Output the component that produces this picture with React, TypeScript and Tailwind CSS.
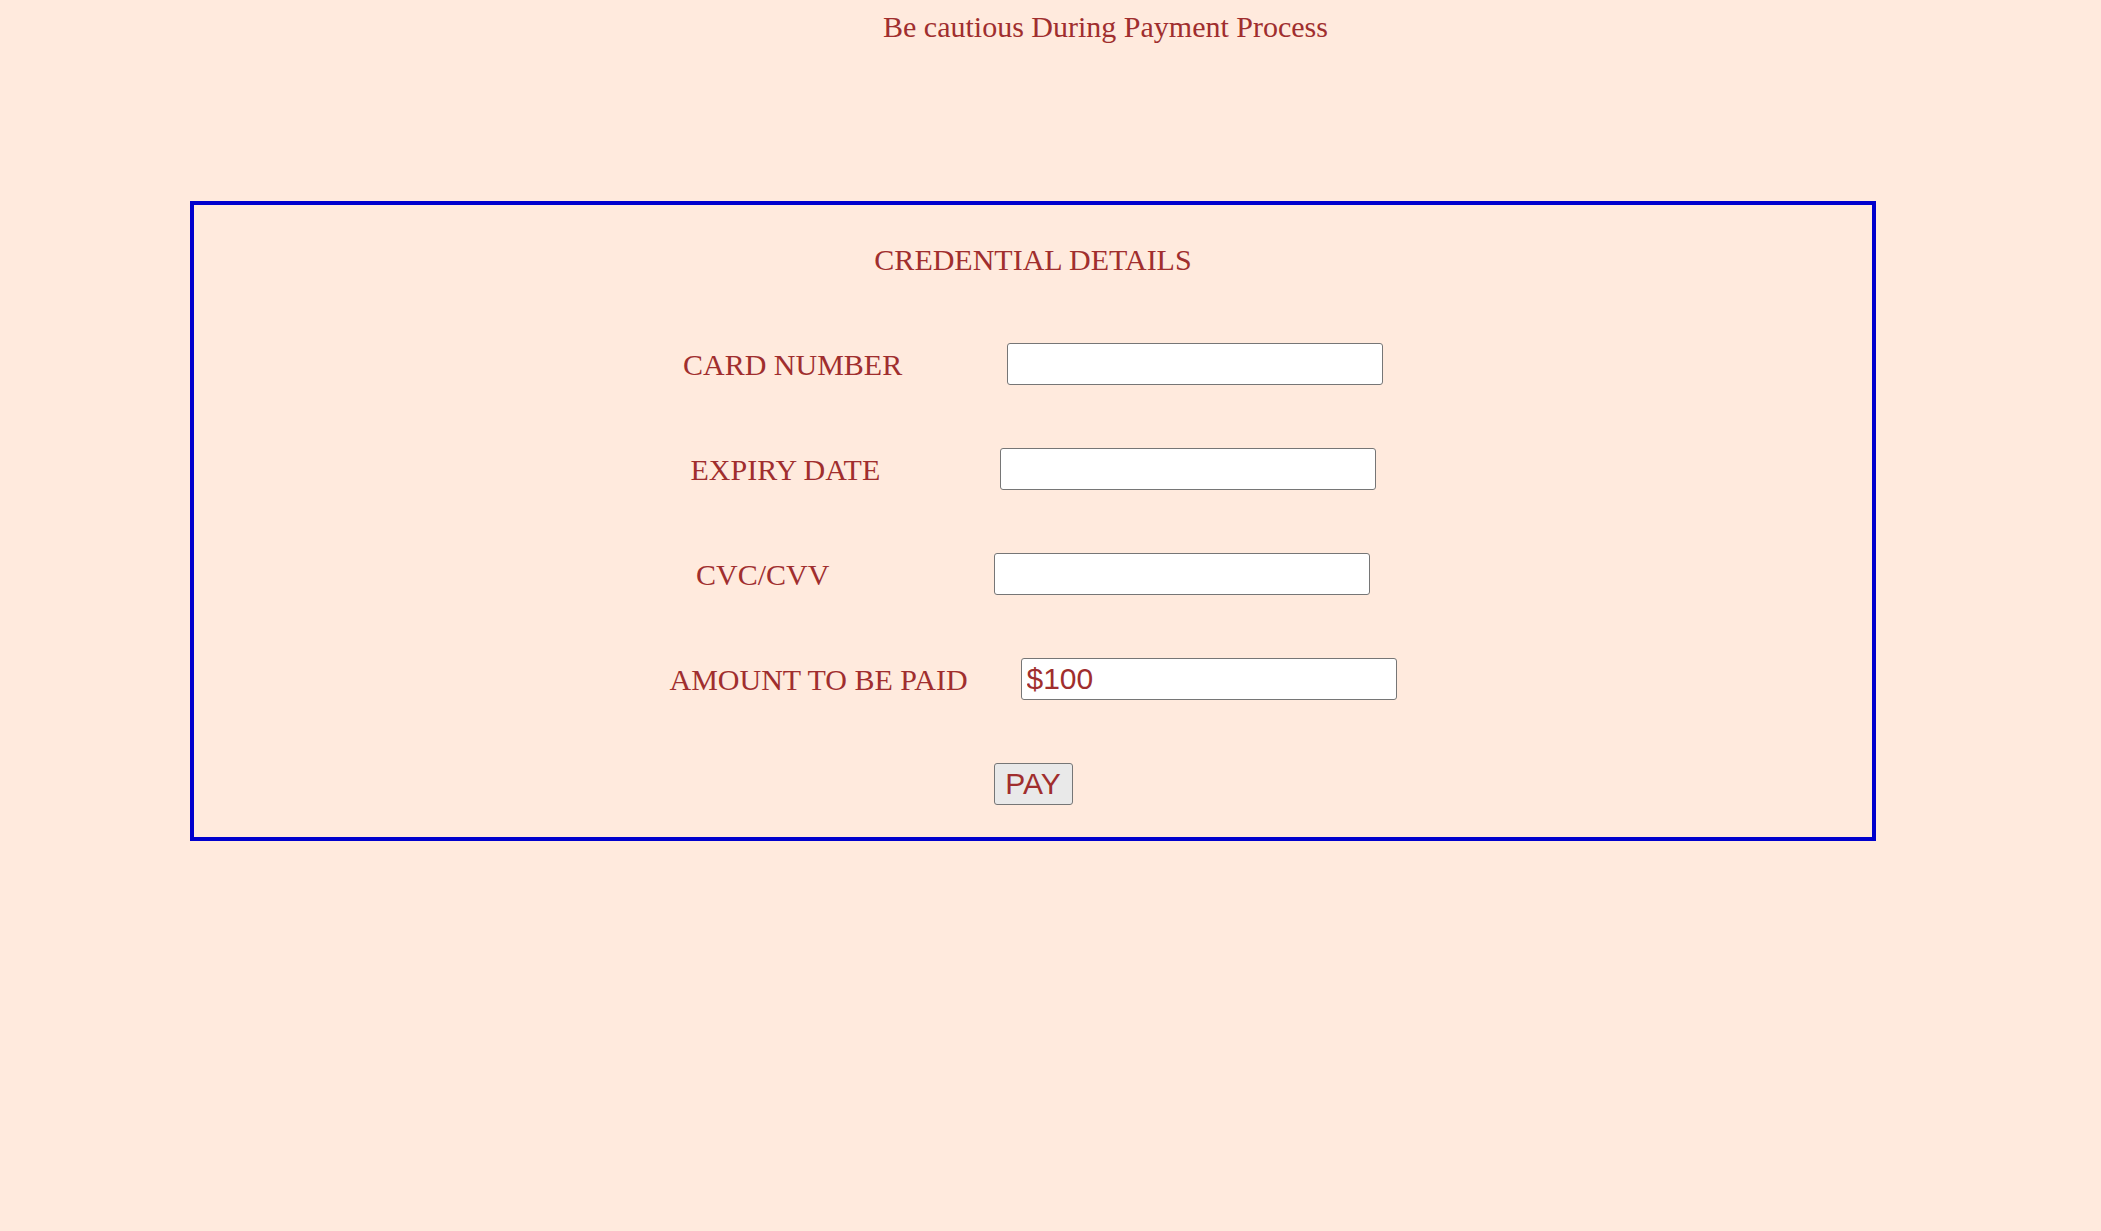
import React from "react";

const serif = { fontFamily: '"Liberation Serif", "Times New Roman", serif' };

function Row({ label, labelW, value }: { label: string; labelW: string; value?: string }) {
  return (
    <div className="flex h-[42px] items-center justify-center">
      <span className={`${labelW} whitespace-nowrap text-[30px] leading-[33px] text-[#a02e2e] font-['Liberation_Serif',serif]`}>
        {label}
      </span>
      <input
        type="text"
        defaultValue={value}
        className="box-border h-[42px] w-[376px] rounded-[3px] border border-[#767676] bg-white pl-[5px] text-[30px] leading-[34px] text-[#a02e2e] outline-none font-['Liberation_Sans',Arial,sans-serif]"
      />
    </div>
  );
}

export default function App() {
  return (
    <div className="min-h-[1231px] w-full bg-[#ffeadd]" style={serif}>
      <div className="pt-[10px] pl-[883px] text-[30px] leading-[34px] text-[#a02e2e] whitespace-nowrap font-['Liberation_Serif',serif]">
        Be cautious During Payment Process
      </div>
      <div className="ml-[190px] mt-[157px] box-border flex w-[1686px] flex-col gap-[63px] border-4 border-[#0000cd] pt-[33px] pb-[32px]">
        <div className="flex h-[42px] items-center justify-center">
          <span className="text-[30px] leading-[33px] text-[#a02e2e] font-['Liberation_Serif',serif]">
            CREDENTIAL DETAILS
          </span>
        </div>
        <Row label="CARD NUMBER" labelW="w-[324px]" />
        <Row label="EXPIRY DATE" labelW="w-[309px]" />
        <Row label="CVC/CVV" labelW="w-[298px]" />
        <Row label="AMOUNT TO BE PAID" labelW="w-[351px]" value="$100" />
        <div className="flex h-[42px] items-center justify-center">
          <button
            type="button"
            className="box-border h-[42px] w-[79px] rounded-[3px] border border-[#767676] bg-[#e9e9e9] text-[30px] leading-[34px] text-[#a02e2e] font-['Liberation_Sans',Arial,sans-serif]"
          >
            PAY
          </button>
        </div>
      </div>
    </div>
  );
}
